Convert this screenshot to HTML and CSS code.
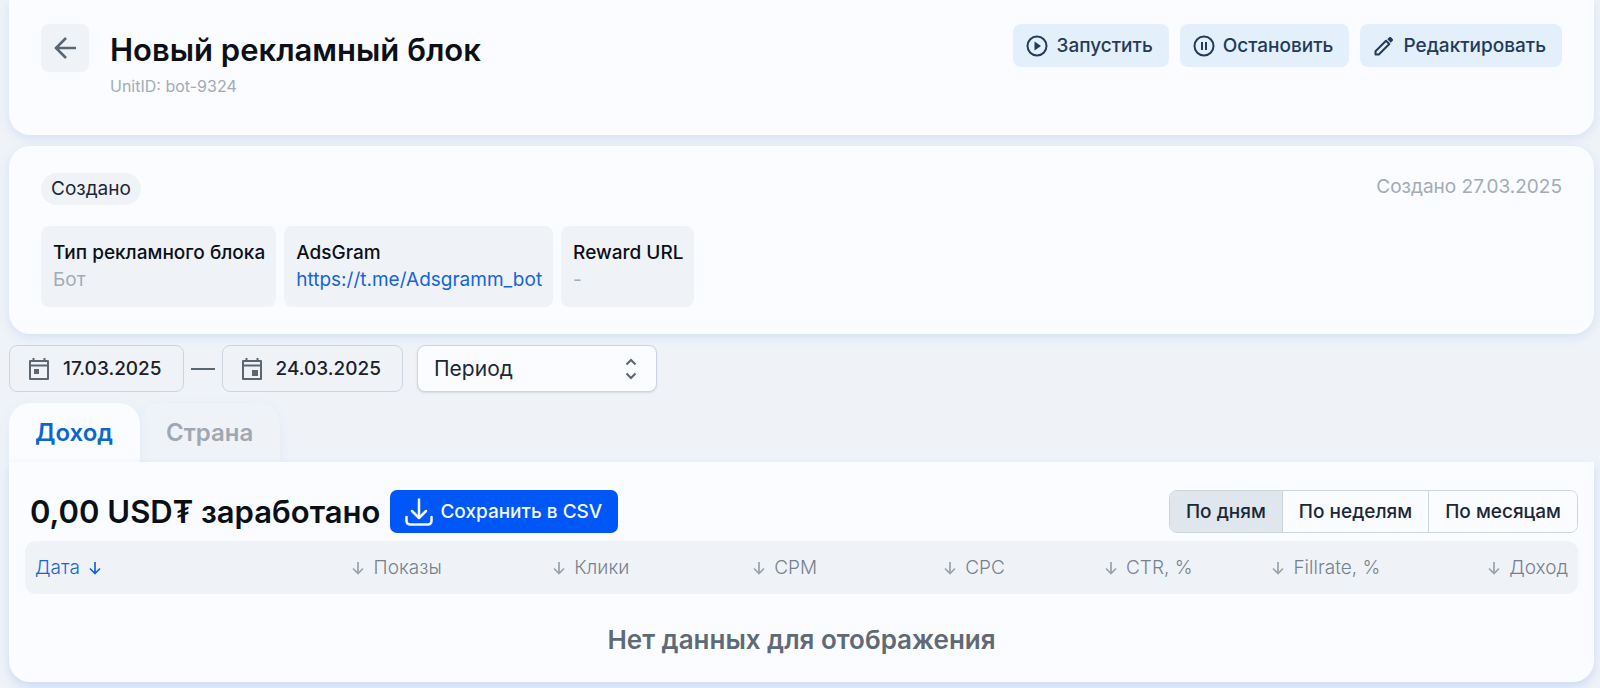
FILE: index.html
```
<!DOCTYPE html>
<html lang="ru">
<head>
    <meta charset="UTF-8">
    <meta name="viewport" content="width=device-width, initial-scale=1.0">
    <title>Новый рекламный блок</title>
    <link rel="stylesheet" href="styles.css">
</head>
<body>

    <!-- стрелка сортировки -->
    <svg class="sprite" aria-hidden="true">
        <symbol id="arrow-down" viewBox="0 0 16 16">
            <path d="M8 2v11.500M3 8.500l5 5 5-5" fill="none" stroke="currentColor" stroke-width="1.700"/>
        </symbol>
    </svg>

    <header class="card header">
        <button class="back" type="button" aria-label="Назад">
            <svg width="24" height="24" viewBox="0 0 24 24" fill="none" stroke="currentColor" stroke-width="2.600">
                <path d="M23 12H3M13 2L3 12l10 10"/>
            </svg>
        </button>
        <div class="heading">
            <h1 class="title">Новый рекламный блок</h1>
            <p class="unit-id">UnitID: bot-9324</p>
        </div>
        <div class="actions">
            <button class="action" type="button">
                <svg width="22" height="22" viewBox="0 0 22 22">
                    <circle cx="11" cy="11" r="9.500" fill="none" stroke="currentColor" stroke-width="2"/>
                    <path d="M8.500 6.500v9l6.500-4.500z" fill="currentColor"/>
                </svg>
                Запустить
            </button>
            <button class="action" type="button">
                <svg width="22" height="22" viewBox="0 0 22 22" fill="none" stroke="currentColor" stroke-width="2">
                    <circle cx="11" cy="11" r="9.500"/>
                    <path d="M9 7v8M13 7v8"/>
                </svg>
                Остановить
            </button>
            <button class="action" type="button">
                <svg width="22" height="22" viewBox="0 0 22 22">
                    <path d="M2.500 19.500v-3.300L13 5.700l3.300 3.300L5.800 19.500z" fill="none" stroke="currentColor" stroke-width="2" stroke-linejoin="round"/>
                    <path d="M14.300 4.200l1.900-1.900c.5-.5 1.300-.5 1.800 0l1.700 1.700c.5.500.5 1.300 0 1.800l-1.900 1.900z" fill="currentColor"/>
                </svg>
                Редактировать
            </button>
        </div>
    </header>

    <section class="card info">
        <div class="info-top">
            <span class="status">Создано</span>
            <span class="created">Создано 27.03.2025</span>
        </div>
        <div class="props">
            <div class="prop">
                <div class="prop-name">Тип рекламного блока</div>
                <div class="prop-value">Бот</div>
            </div>
            <div class="prop">
                <div class="prop-name">AdsGram</div>
                <a class="prop-link" href="https://t.me/Adsgramm_bot">https://t.me/Adsgramm_bot</a>
            </div>
            <div class="prop">
                <div class="prop-name">Reward URL</div>
                <div class="prop-value">-</div>
            </div>
        </div>
    </section>

    <!-- период -->
    <div class="filters">
        <button class="date" type="button">
            <svg width="22" height="24" viewBox="0 0 22 24">
                <path d="M2 4h18v18H2zM2 8.500h18M5.500 1v3M16.500 1v3" fill="none" stroke="currentColor" stroke-width="2" stroke-linejoin="round"/>
                <path d="M6 12h5v5H6z" fill="currentColor"/>
            </svg>
            17.03.2025
        </button>
        <span class="dash"></span>
        <button class="date" type="button">
            <svg width="22" height="24" viewBox="0 0 22 24">
                <path d="M2 4h18v18H2zM2 8.500h18M5.500 1v3M16.500 1v3" fill="none" stroke="currentColor" stroke-width="2" stroke-linejoin="round"/>
                <path d="M11 13h6v6h-6z" fill="currentColor"/>
            </svg>
            24.03.2025
        </button>
        <div class="period">
            <select class="period-select" aria-label="Период">
                <option>Период</option>
            </select>
            <svg class="period-icon" width="12" height="22" viewBox="0 0 12 22" fill="none" stroke="currentColor" stroke-width="2">
                <path d="M1.500 6.500L6 2l4.500 4.500M1.500 15.500L6 20l4.500-4.500"/>
            </svg>
        </div>
    </div>

    <nav class="tabs">
        <button class="tab active" type="button">Доход</button>
        <button class="tab" type="button">Страна</button>
    </nav>

    <main class="panel">
        <div class="panel-top">
            <h2 class="title">0,00 USD₮ заработано</h2>
            <button class="save" type="button">
                <svg width="28" height="28" viewBox="0 0 28 28" fill="none" stroke="currentColor" stroke-width="2.500" stroke-linecap="round" stroke-linejoin="round">
                    <path d="M14 1.500v18M7 13l7 7 7-7M1.500 19v3.500c0 2.500 1.500 4 4 4h17c2.500 0 4-1.500 4-4V19"/>
                </svg>
                Сохранить в CSV
            </button>
            <div class="group">
                <button class="group-item selected" type="button">По дням</button>
                <button class="group-item" type="button">По неделям</button>
                <button class="group-item" type="button">По месяцам</button>
            </div>
        </div>
        <table class="stats">
            <thead>
                <tr>
                    <th class="sorted">Дата <svg class="arrow"><use href="#arrow-down"/></svg></th>
                    <th><svg class="arrow"><use href="#arrow-down"/></svg> Показы</th>
                    <th><svg class="arrow"><use href="#arrow-down"/></svg> Клики</th>
                    <th><svg class="arrow"><use href="#arrow-down"/></svg> CPM</th>
                    <th><svg class="arrow"><use href="#arrow-down"/></svg> CPC</th>
                    <th><svg class="arrow"><use href="#arrow-down"/></svg> CTR, %</th>
                    <th><svg class="arrow"><use href="#arrow-down"/></svg> Fillrate, %</th>
                    <th><svg class="arrow"><use href="#arrow-down"/></svg> Доход</th>
                </tr>
            </thead>
            <tbody>
                <tr>
                    <td class="empty" colspan="8">Нет данных для отображения</td>
                </tr>
            </tbody>
        </table>
    </main>

</body>
</html>
```
FILE: styles.css
```
* {
    box-sizing: border-box;
}

body {
    margin: 0;
    padding: 0 6px 6px 9px;
    font-family: Inter, "Liberation Sans", sans-serif;
    font-size: 19px;
    color: #0b1016;
    background-color: #eff3f8;
}

button,
select {
    font-family: inherit;
    color: inherit;
    cursor: pointer;
}

svg {
    flex-shrink: 0;
}

.sprite {
    display: none;
}

.card {
    background-color: #fbfcff;
    border-radius: 21px;
    box-shadow: 0 3px 11px #d3e0f6;
}

.title {
    margin: 0;
    font-size: 31px;
    font-weight: 600;
    line-height: 40px;
}

/* шапка */
.header {
    display: flex;
    align-items: flex-start;
    padding: 24px 32px 38px;
    border-radius: 0 0 21px 21px;
}

.back {
    display: flex;
    align-items: center;
    justify-content: center;
    width: 48px;
    height: 48px;
    border: none;
    border-radius: 8px;
    background-color: #eff3f8;
    color: #5b6673;
}

.heading {
    margin-left: 21px;
    padding-top: 6px;
}

.unit-id {
    margin: 5px 0 0;
    font-size: 16px;
    line-height: 22px;
    color: #a2abb6;
}

.actions {
    display: flex;
    gap: 11px;
    margin-left: auto;
}

.action {
    display: flex;
    align-items: center;
    gap: 8px;
    height: 43px;
    padding: 0 16px 0 13px;
    border: none;
    border-radius: 8px;
    background-color: #e3effb;
    color: #243a57;
    font-size: 19px;
    font-weight: 500;
}

/* информация о блоке */
.info {
    margin-top: 11px;
    padding: 27px 32px;
}

.info-top {
    display: flex;
    justify-content: space-between;
    align-items: flex-start;
}

.status {
    padding: 0 10px;
    border-radius: 16px;
    background-color: #eff3f8;
    color: #1a2736;
    line-height: 32px;
}

.created {
    line-height: 28px;
    color: #a2abb6;
}

.props {
    display: flex;
    gap: 8px;
    margin-top: 21px;
}

.prop {
    padding: 13px 11px 14px 12px;
    border-radius: 8px;
    background-color: #eff3f8;
    line-height: 27px;
}

.prop-name {
    font-weight: 500;
}

.prop-value {
    color: #a2abb6;
}

.prop-link {
    color: #1565d8;
    text-decoration: none;
}

/* фильтры */
.filters {
    display: flex;
    align-items: center;
    margin-top: 11px;
}

.date {
    display: flex;
    align-items: center;
    gap: 13px;
    height: 47px;
    padding: 0 21px 0 18px;
    border: 1px solid #cbd5e0;
    border-radius: 8px;
    background-color: #eff3f8;
    color: #1a2028;
    font-size: 19px;
    font-weight: 500;
}

.date svg {
    color: #5b6673;
}

.dash {
    width: 24px;
    height: 2px;
    margin: 0 7px;
    background-color: #5b6673;
}

.period {
    position: relative;
    display: flex;
    margin-left: 14px;
}

.period-select {
    appearance: none;
    width: 240px;
    height: 47px;
    padding: 0 16px;
    border: 1px solid #cbd5e0;
    border-radius: 8px;
    background-color: #fbfcff;
    box-shadow: 0 1px 2px #d3dbe6;
    color: #1a2736;
    font-size: 21px;
}

.period-icon {
    position: absolute;
    top: 13px;
    right: 20px;
    color: #5b6673;
    pointer-events: none;
}

/* вкладки */
.tabs {
    display: flex;
    margin-top: 11px;
}

.tab {
    height: 59px;
    padding: 0 27px 0 26px;
    border: none;
    border-radius: 21px 21px 0 0;
    background-color: #eff3f8;
    box-shadow: 0 3px 11px #e0e9f8;
    color: #9fa8b2;
    font-size: 24px;
    font-weight: 600;
}

.tab.active {
    z-index: 1;
    background-color: #fbfcff;
    color: #0b66d0;
}

/* таблица дохода */
.panel {
    position: relative;
    z-index: 2;
    padding: 28px 16px 15px;
    border-radius: 0 0 21px 21px;
    background-color: #fbfcff;
    box-shadow: 0 5px 11px #cbdaf5;
}

.panel-top {
    display: flex;
    align-items: center;
    gap: 10px;
    margin-bottom: 8px;
    padding-left: 5px;
}

.save {
    display: flex;
    align-items: center;
    gap: 7px;
    height: 43px;
    padding: 0 16px 0 15px;
    border: none;
    border-radius: 7px;
    background-color: #0057f8;
    color: #f5f8ff;
    font-size: 19px;
    font-weight: 500;
}

.group {
    display: flex;
    margin-left: auto;
    border: 1px solid #cbd5e0;
    border-radius: 8px;
    overflow: hidden;
}

.group-item {
    height: 41px;
    padding: 0 16px;
    border: none;
    background-color: #fbfcff;
    color: #1a2736;
    font-size: 19px;
    font-weight: 500;
}

.group-item + .group-item {
    border-left: 1px solid #cbd5e0;
}

.group-item.selected {
    background-color: #dfe6ed;
}

.stats {
    width: 100%;
    border-spacing: 0;
    table-layout: fixed;
}

.stats th {
    height: 53px;
    padding: 0 10px;
    background-color: #eff3f8;
    color: #76818e;
    font-weight: 300;
    text-align: right;
    white-space: nowrap;
}

.stats th:first-child {
    width: 239px;
    border-radius: 11px 0 0 11px;
    text-align: left;
}

.stats th:last-child {
    border-radius: 0 11px 11px 0;
}

.arrow {
    width: 16px;
    height: 16px;
    margin: 0 2px;
    color: #98a2ad;
    vertical-align: -2px;
}

.stats .sorted,
.sorted .arrow {
    color: #1565d8;
}

.stats .empty {
    padding: 30px 0 11px;
    color: #5f6a76;
    font-size: 26px;
    font-weight: 600;
    line-height: 32px;
    text-align: center;
}
```
